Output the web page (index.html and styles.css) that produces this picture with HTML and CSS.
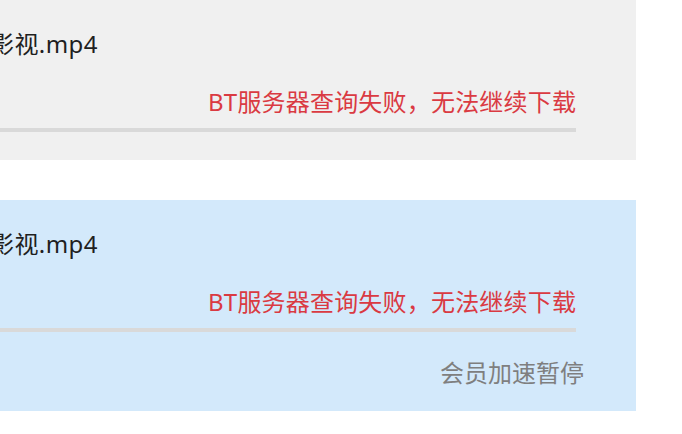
FILE: index.html
```html
<!DOCTYPE html>
<html lang="zh-CN">
<head>
<meta charset="utf-8">
<title>下载列表</title>
<link rel="stylesheet" href="styles.css">
</head>
<body>
<ul class="task-list">
  <li class="task">
    <div class="task-info">
      <div class="task-name">影视.mp4</div>
      <div class="task-status error">BT服务器查询失败，无法继续下载</div>
      <div class="progress"><div class="progress-fill" style="width:0%"></div></div>
    </div>
  </li>
  <li class="task selected">
    <div class="task-info">
      <div class="task-name">影视.mp4</div>
      <div class="task-status error">BT服务器查询失败，无法继续下载</div>
      <div class="progress"><div class="progress-fill" style="width:0%"></div></div>
      <div class="task-actions">
        <span class="action">会员加速暂停</span>
      </div>
    </div>
  </li>
</ul>
</body>
</html>
```

FILE: styles.css
```css
html, body {
  margin: 0;
  padding: 0;
  background: #ffffff;
}

body {
  font-family: "Noto Sans", "Noto Sans CJK SC", sans-serif;
  font-size: 24px;
  line-height: 32px;
  color: #1f1f1f;
}

.task-list {
  list-style: none;
  margin: 0;
  padding: 0;
  display: flex;
  flex-direction: column;
  gap: 40px;
}

.task {
  width: 636px;
  background: #f0f0f0;
  padding: 28px 0 28px 0;
  box-sizing: border-box;
  display: flex;
}

.task.selected {
  background: #d3e9fb;
  padding-bottom: 22px;
}

.task-info {
  flex: 1;
  margin-left: -10px;
  margin-right: 60px;
  display: flex;
  flex-direction: column;
}

.task-name {
  white-space: nowrap;
  letter-spacing: 0.4px;
}

.task-status {
  margin-top: 26px;
  text-align: right;
  white-space: nowrap;
  letter-spacing: 0.2px;
  margin-right: -0.2px;
}

.error {
  color: #da3a42;
}

.progress {
  margin-top: 10px;
  height: 4px;
  background: #d9d9d9;
}

.progress-fill {
  height: 100%;
  background: #3f9cf0;
}

.task-actions {
  margin-top: 25px;
  margin-right: -8px;
  display: flex;
  justify-content: flex-end;
}

.action {
  color: #7f7f7f;
  white-space: nowrap;
}
```
